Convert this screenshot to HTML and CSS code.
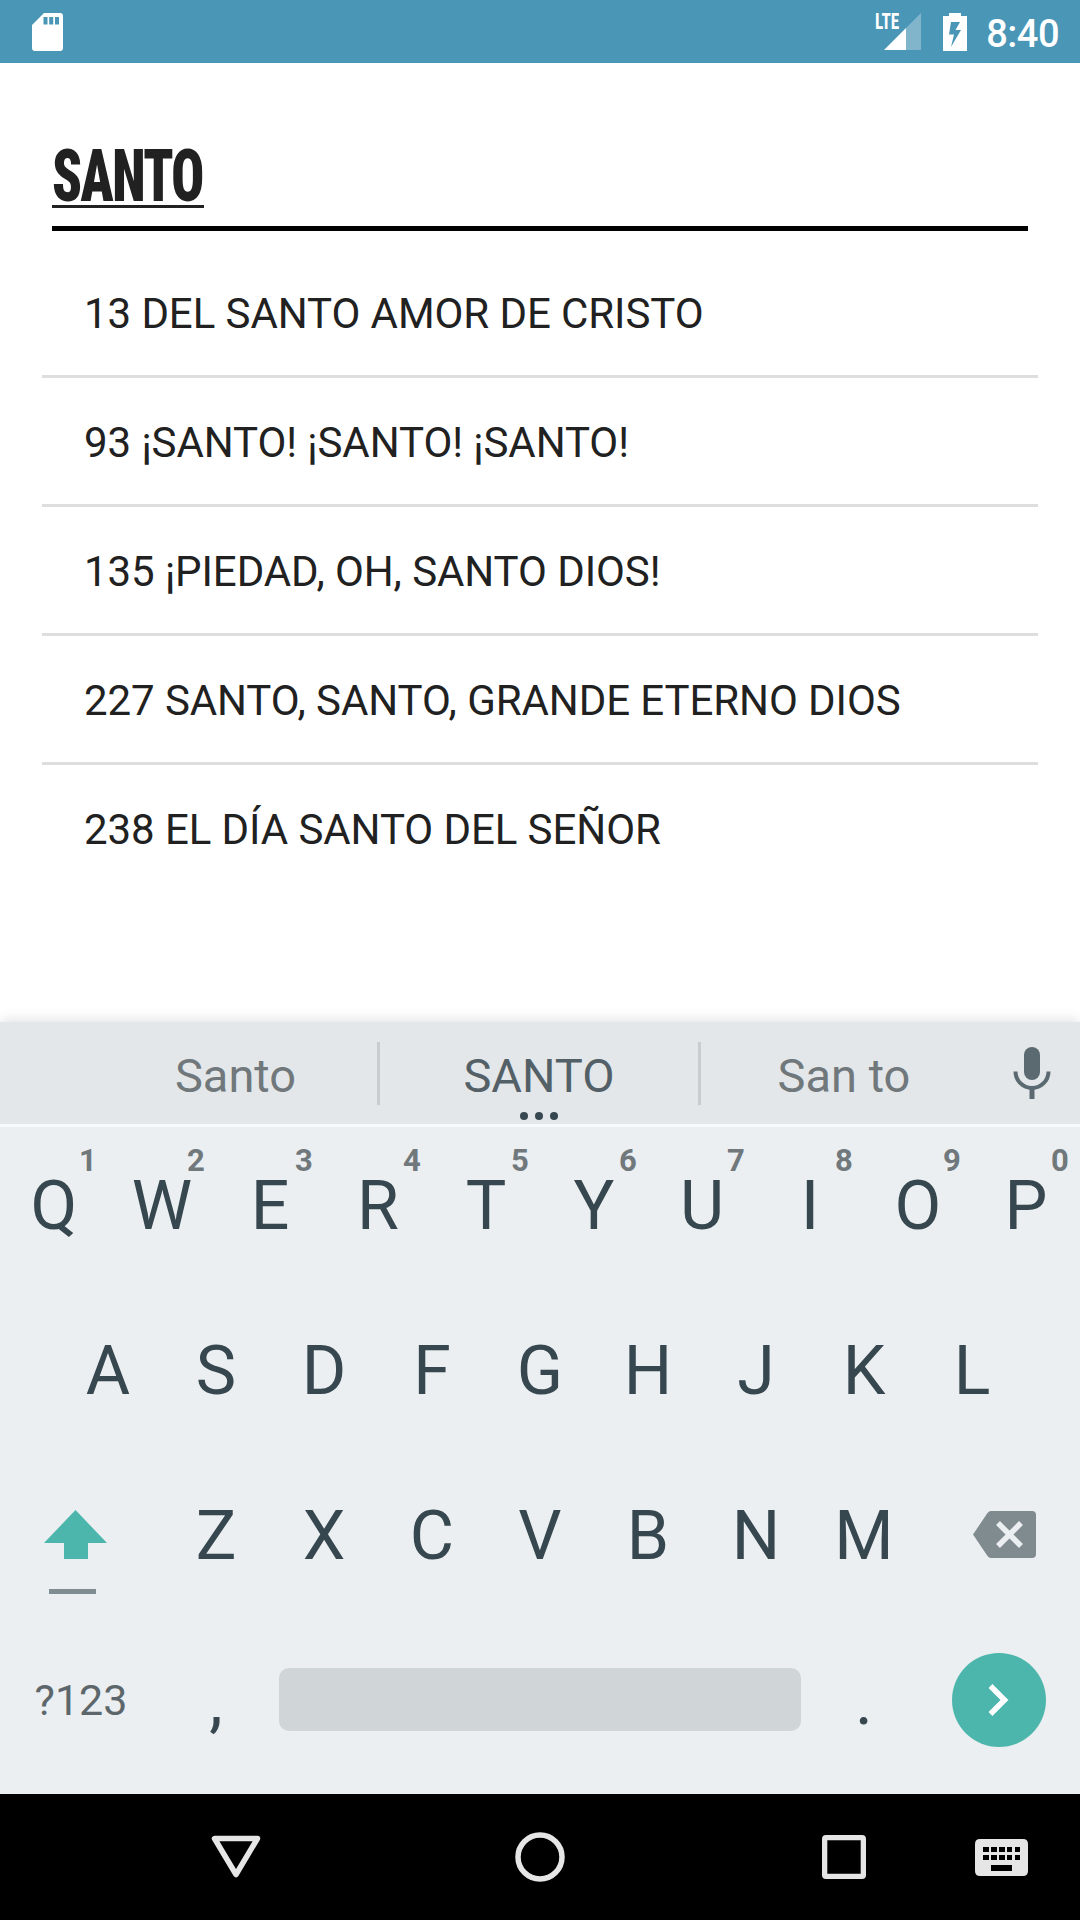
FILE: index.html
```html
<!DOCTYPE html>
<html lang="es">
<head>
<meta charset="utf-8">
<title>SANTO</title>
<link rel="stylesheet" href="styles.css">
</head>
<body>
<div class="screen">
  <header class="status">
    <svg class="sd" width="31" height="38" viewBox="0 0 31 38"><path fill="#fff" fill-rule="evenodd" d="M12 0H28Q31 0 31 3V35Q31 38 28 38H3Q0 38 0 35V12ZM11.5 4V11.500H15.500V4ZM17.200 4V11.500H21.200V4ZM23 4V11.500H27V4Z"/></svg>
    <div class="signal">
      <span class="lte">LTE</span>
      <svg width="37" height="37" viewBox="0 0 37 37"><path fill="#fff" fill-opacity=".3" d="M37 0V37H22V15Z"/><path fill="#fff" d="M22 15V37H0Z"/></svg>
    </div>
    <svg class="battery" width="24" height="38" viewBox="0 0 24 38"><path fill="#fff" fill-rule="evenodd" d="M6 0H18V3H24V38H0V3H6ZM8 9L6 21.500H11L8 34L18 17H12.500L17 9Z"/></svg>
    <span class="time">8:40</span>
  </header>

  <main class="content">
    <div class="field"><h1 class="query"><span class="query-text">SANTO</span></h1></div>
    <ul class="results">
      <li>13 DEL SANTO AMOR DE CRISTO</li>
      <li>93 ¡SANTO! ¡SANTO! ¡SANTO!</li>
      <li>135 ¡PIEDAD, OH, SANTO DIOS!</li>
      <li>227 SANTO, SANTO, GRANDE ETERNO DIOS</li>
      <li>238 EL DÍA SANTO DEL SEÑOR</li>
    </ul>
  </main>

  <section class="keyboard">
    <div class="strip">
      <span class="word">Santo</span>
      <span class="word main">SANTO<svg class="dots" width="40" height="10" viewBox="0 0 40 10"><g fill="#37474f"><circle cx="5" cy="5" r="4"/><circle cx="20" cy="5" r="4"/><circle cx="35" cy="5" r="4"/></g></svg></span>
      <span class="word">San to</span>
      <svg class="mic" width="38" height="54" viewBox="0 0 38 54"><rect x="11" y="1" width="16" height="33" rx="8" fill="#5b6a71"/><path d="M2.500 25.500a16.500 16.500 0 0 0 33 0" fill="none" stroke="#5b6a71" stroke-width="4"/><path d="M16.500 42h5v11h-5z" fill="#5b6a71"/></svg>
    </div>
    <div class="keys">
      <div class="row first">
        <span class="key">Q<sup>1</sup></span><span class="key">W<sup>2</sup></span><span class="key">E<sup>3</sup></span><span class="key">R<sup>4</sup></span><span class="key">T<sup>5</sup></span><span class="key">Y<sup>6</sup></span><span class="key">U<sup>7</sup></span><span class="key">I<sup>8</sup></span><span class="key">O<sup>9</sup></span><span class="key">P<sup>0</sup></span>
      </div>
      <div class="row">
        <span class="key">A</span><span class="key">S</span><span class="key">D</span><span class="key">F</span><span class="key">G</span><span class="key">H</span><span class="key">J</span><span class="key">K</span><span class="key">L</span>
      </div>
      <div class="row">
        <span class="side shift"><svg width="64" height="86" viewBox="0 0 64 86"><path fill="#4db6ac" d="M31.500 0L63 33H44V49H20V33H0Z"/><path fill="#7f8c92" d="M5 79H52V84H5Z"/></svg></span>
        <span class="key">Z</span><span class="key">X</span><span class="key">C</span><span class="key">V</span><span class="key">B</span><span class="key">N</span><span class="key">M</span>
        <span class="side erase"><svg width="63" height="47" viewBox="0 0 63 47"><path fill="#7f8b8f" d="M18 0H59Q63 0 63 4V43Q63 47 59 47H18Q16 47 14.500 45L0 23.500L14.500 2Q16 0 18 0Z"/><path d="M25 12L48 35M48 12L25 35" stroke="#ebeff1" stroke-width="5.500"/></svg></span>
      </div>
      <div class="row bottom">
        <span class="symbols">?123</span>
        <span class="key">,</span>
        <span class="space"></span>
        <span class="key">.</span>
        <span class="enter"><svg width="94" height="94" viewBox="0 0 94 94"><circle cx="47" cy="47" r="47" fill="#4db6ac"/><path d="M38.500 33L52.500 47L38.500 61" fill="none" stroke="#fff" stroke-width="5.500"/></svg></span>
      </div>
    </div>
  </section>

  <nav class="nav">
    <svg width="50" height="44" viewBox="0 0 50 44"><path d="M3.500 3.500H46.500L25 39.500Z" fill="none" stroke="#e6e6e6" stroke-width="5.500" stroke-linejoin="round"/></svg>
    <svg width="50" height="50" viewBox="0 0 50 50"><circle cx="25" cy="25" r="22" fill="none" stroke="#e6e6e6" stroke-width="5.500"/></svg>
    <svg width="44" height="44" viewBox="0 0 44 44"><path fill="#e6e6e6" fill-rule="evenodd" d="M4 0H40Q44 0 44 4V40Q44 44 40 44H4Q0 44 0 40V4Q0 0 4 0ZM5.300 5.300V38.700H38.700V5.300Z"/></svg>
    <svg class="ime" width="53" height="37" viewBox="0 0 53 37"><path fill="#e6e6e6" fill-rule="evenodd" d="M5 0H48Q53 0 53 5V32Q53 37 48 37H5Q0 37 0 32V5Q0 0 5 0ZM8 8V13H14V8ZM16 8V13H22V8ZM24 8V13H30V8ZM32 8V13H37V8ZM40 8V13H45V8ZM8 16V21H14V16ZM16 16V21H22V16ZM24 16V21H30V16ZM32 16V21H37V16ZM40 16V21H45V16ZM16 26V32H37V26Z"/></svg>
  </nav>
</div>
</body>
</html>
```
FILE: styles.css
```css
* { box-sizing: border-box; }
body { margin: 0; font-family: Roboto, sans-serif; background: #fff; }
svg { display: block; flex: none; }

.screen { width: 1080px; height: 1920px; display: flex; flex-direction: column; overflow: hidden; }

.status { height: 63px; background: #4996b7; display: flex; align-items: center; padding: 0 21px 0 32px; color: #fff; }
.sd { margin-right: auto; }
.signal { position: relative; width: 46px; display: flex; justify-content: flex-end; margin-right: 22px; }
.lte { position: absolute; left: 0; top: 0; font-size: 22px; line-height: 18px; font-weight: 700; font-stretch: 75%; transform: scaleX(.78); transform-origin: 0 0; }
.battery { margin-right: 19px; }
.time { font-size: 38px; font-weight: 500; line-height: 40px; padding-top: 4px; letter-spacing: -.5px; }

.content { flex: 1; padding: 63px 42px 0; }
.field { height: 105px; margin: 0 10px; padding-top: 13px; border-bottom: 5px solid #000; }
.query { margin: 0; width: 152px; height: 69px; border-bottom: 3px solid #212121; color: #212121; font-size: 72px; line-height: 75px; font-weight: 900; }
.query-text { display: block; width: max-content; font-stretch: 75%; letter-spacing: -2px; transform: scaleX(.76); transform-origin: 0 0; }

.results { list-style: none; margin: 18px 0 0; padding: 0; }
.results li { height: 129px; padding: 2px 42px 0; font-size: 42px; line-height: 126px; letter-spacing: -.08px; color: #212121; border-bottom: 3px solid #dedede; white-space: nowrap; }
.results li:last-child { border-bottom: 0; }

.keyboard { height: 772px; background: #ebeff1; box-shadow: 0 -2px 12px rgba(0, 0, 0, .12); }
.strip { height: 102px; background: #e3e7e9; display: flex; align-items: center; padding-left: 94px; font-size: 47px; color: #70787c; }
.word { width: 283px; text-align: center; line-height: 63px; padding-top: 2px; height: 63px; }
.main { position: relative; width: 324px; color: #546067; border: solid #c8cdd0; border-width: 0 3px; }
.dots { position: absolute; left: 139px; top: 69px; }
.word:nth-of-type(3) { width: 286px; }
.mic { margin: 0 0 0 26px; }

.keys { border-top: 3px solid #f7fafb; display: grid; grid-template-rows: 160px repeat(3, 165px); }
.row { display: flex; justify-content: center; align-items: center; }
.first { padding-bottom: 5px; }
.key { position: relative; width: 108px; flex: none; padding-top: 2px; text-align: center; font-size: 68px; line-height: 80px; color: #37474f; }
.key sup { position: absolute; left: 78px; top: -21px; width: 20px; font-size: 31px; line-height: 36px; font-weight: 700; color: #70787c; }
.side { width: 162px; flex: none; }
.shift { padding: 36px 0 0 44px; }
.erase svg { margin-left: 55px; }
.bottom { justify-content: flex-start; }
.symbols { width: 162px; text-align: center; font-size: 43px; color: #5d676b; }
.space { width: 522px; height: 63px; margin: 0 9px; border-radius: 10px; background: #d0d5d8; }
.enter { margin-left: 34px; }

.nav { height: 126px; background: #000; display: flex; align-items: center; padding-left: 211px; }
.nav svg:nth-child(2) { margin-left: 254px; }
.nav svg:nth-child(3) { margin-left: 257px; }
.nav .ime { margin-left: 109px; }
```
